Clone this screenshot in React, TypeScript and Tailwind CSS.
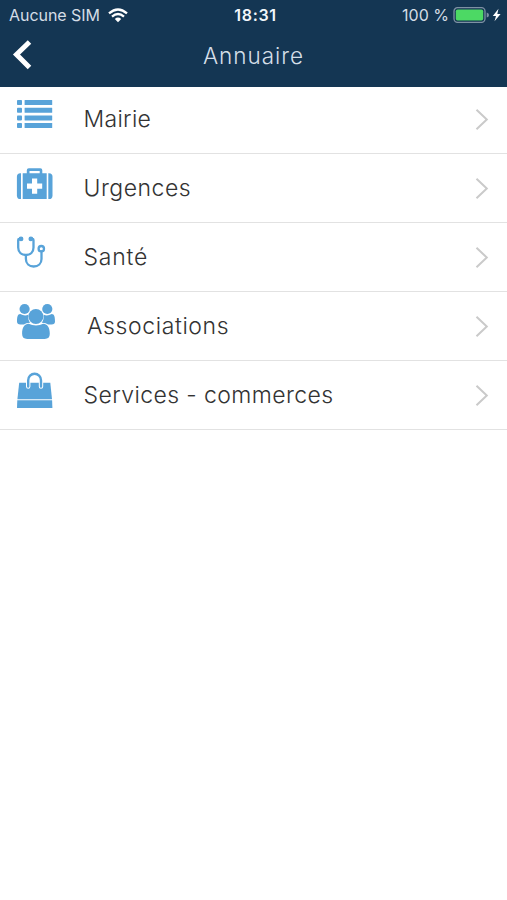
import type { ReactNode } from "react";

const ListIcon = () => (
  <g fill="#58a3d9">
    {[15, 22.7, 30.4, 38.1].map((y) => (
      <g key={y}>
        <rect x="17" y={y} width="5" height="5" rx="0.8" />
        <rect x="24.6" y={y} width="27.6" height="5" rx="0.3" />
      </g>
    ))}
  </g>
);

const MedkitIcon = () => (
  <g fill="#58a3d9">
    <path d="M21 19.2V45H20.300q-3.400 0-3.400-3.600V22.800q0-3.600 3.400-3.600Z" />
    <path d="M48.300 19.200V45H49q3.500 0 3.500-3.600V22.800q0-3.600-3.500-3.600Z" />
    <path
      fillRule="evenodd"
      d="M22.700 45V19.200H26.800V16.300Q26.800 14.300 28.800 14.300H40.300Q42.300 14.300 42.300 16.300V19.200H46.700V45ZM29.500 19.200H39.700V17H29.500ZM32 24.400V29.500H27V34.700H32V39.800H37.200V34.700H42.200V29.500H37.200V24.400Z"
    />
  </g>
);

const StethoscopeIcon = () => (
  <g fill="none" stroke="#58a3d9" strokeWidth="2.3" strokeLinecap="round">
    <path d="M20.700 15.800H19.200Q18.200 15.800 18.200 17V24.500C18.200 29 21.400 32 25.900 32S33.500 29 33.500 24.500V17Q33.500 15.800 32.300 15.800H31" />
    <path d="M25.900 32.500V36C25.900 40.500 29.200 43.500 33.700 43.500S41.500 40.500 41.500 36V28.500" />
    <circle cx="41.300" cy="25.700" r="2.700" />
    <circle cx="21" cy="15.900" r="1.300" fill="#58a3d9" />
    <circle cx="30.900" cy="15.900" r="1.300" fill="#58a3d9" />
  </g>
);

const UsersIcon = () => (
  <g fill="#58a3d9">
    <circle cx="24.600" cy="17" r="5.100" />
    <circle cx="47.300" cy="17" r="5.100" />
    <path d="M17 29.500C17 25.500 17.500 22 20.200 22Q24.500 24.500 28.300 22.800C27.900 26.500 28.600 29 30.200 30.800Q26 30.700 23.900 32.500H20.400Q17 32.500 17 29.500Z" />
    <path d="M55 29.500C55 25.500 54.500 22 51.700 22Q47.500 24.500 43.600 22.800C44 26.500 43.300 29 41.700 30.800Q46 30.700 48.100 32.500H51.600Q55 32.500 55 29.500Z" />
    <circle cx="35.900" cy="24.500" r="7.500" />
    <path d="M28.700 31.700C24.500 31.700 22.100 35.500 22.100 41.700Q22.100 46.900 27.200 46.900H44.700Q49.800 46.900 49.800 41.700C49.800 35.500 47.300 31.700 43.200 31.700Q40 33.500 36 33.500T28.700 31.700Z" />
  </g>
);

const BagIcon = () => (
  <g fill="#58a3d9">
    <path d="M19.200 21.800H50.300L52 38.300H17.400Z" />
    <path d="M17.300 39.300H52.100L52.400 46.900H17Z" />
    <path
      d="M28.200 25.500V19.200A6.400 6.400 0 0 1 41 19.200V25.500"
      fill="none"
      stroke="#fff"
      strokeWidth="4.400"
      strokeLinecap="round"
    />
    <path
      d="M28.200 25.500V19.200A6.400 6.400 0 0 1 41 19.200V25.500"
      fill="none"
      stroke="#58a3d9"
      strokeWidth="2.400"
      strokeLinecap="round"
    />
  </g>
);

type Entry = { label: string; icon: ReactNode; text: string; row: string };

const entries: Entry[] = [
  { label: "Mairie", icon: <ListIcon />, text: "pl-[21.5px] tracking-[0.3px]", row: "h-[67px]" },
  { label: "Urgences", icon: <MedkitIcon />, text: "pl-[21.5px] tracking-[0.5px]", row: "h-[69px]" },
  { label: "Santé", icon: <StethoscopeIcon />, text: "pl-[21.5px] tracking-[0.8px]", row: "h-[69px]" },
  { label: "Associations", icon: <UsersIcon />, text: "pl-[25px] tracking-[0.6px]", row: "h-[69px]" },
  { label: "Services - commerces", icon: <BagIcon />, text: "pl-[21.5px] tracking-[0.4px]", row: "h-[69px]" },
];

const StatusBar = () => (
  <div className="grid h-[30px] grid-cols-3 items-center text-[16px] leading-[30px] text-[#d5dde6]">
    <div className="flex items-center gap-[8px] pl-[9px]">
      <span className="tracking-[-0.05px] whitespace-nowrap">Aucune SIM</span>
      <svg width="20" height="15" viewBox="0 0 20 15" fill="none" stroke="#fff" strokeWidth="2.300">
        <path d="M1 5.400Q10-2.500 19 5.400" />
        <path d="M4 8.700Q10 3.400 16 8.700" />
        <path d="M6.800 11L10 14.200L13.200 11Q10 8.200 6.800 11Z" fill="#fff" stroke="none" />
      </svg>
    </div>
    <span className="pl-[4px] text-center font-semibold tracking-[0.7px] text-[#f2f6fa]">18:31</span>
    <div className="flex items-center justify-end pr-[6px]">
      <span className="whitespace-nowrap">100 %</span>
      <svg className="ml-[4px]" width="48" height="18" viewBox="0 0 48 18">
        <rect x="1" y="1.700" width="31" height="14.600" rx="3.500" fill="none" stroke="#7e91a4" strokeWidth="1.300" />
        <rect x="2.800" y="3.500" width="27.400" height="11" rx="1.800" fill="#4cd964" />
        <path d="M33.700 6.500Q36 7 36 9T33.700 11.500Z" fill="#7e91a4" />
        <path d="M45.500 2.800L39.800 9.900H43L41.500 15.300L47.600 7.900H44.300Z" fill="#fff" />
      </svg>
    </div>
  </div>
);

export default function App() {
  return (
    <div className="min-h-screen w-full bg-white font-['Inter',sans-serif]">
      <header className="h-[87px] bg-[#143653]">
        <StatusBar />
        <div className="grid h-[52px] grid-cols-[60px_1fr_60px] items-center">
          <button aria-label="Retour" className="pl-[12px]">
            <svg width="22" height="36" viewBox="0 0 22 36" fill="none" stroke="#fff" strokeWidth="5">
              <path d="M17.500 4L4.500 16.500L17.500 29.500" />
            </svg>
          </button>
          <h1 className="text-center text-[22.5px] font-light tracking-[1px] text-[#d5dfe8]">Annuaire</h1>
        </div>
      </header>
      <ul>
        {entries.map(({ label, icon, text, row }) => (
          <li key={label} className={`flex items-end border-b border-[#e2e2e2] ${row}`}>
            <svg className="shrink-0" width="62" height="68" viewBox="0 0 62 68">
              {icon}
            </svg>
            <span className={`grow text-[23px] leading-[68px] font-light whitespace-nowrap text-[#333] ${text}`}>
              {label}
            </span>
            <svg className="mr-[16px] shrink-0" width="18" height="68" viewBox="0 0 18 68" fill="none" stroke="#cacaca" strokeWidth="2">
              <path d="M3.500 24.800L13.800 34.500L3.500 44.300" />
            </svg>
          </li>
        ))}
      </ul>
    </div>
  );
}
